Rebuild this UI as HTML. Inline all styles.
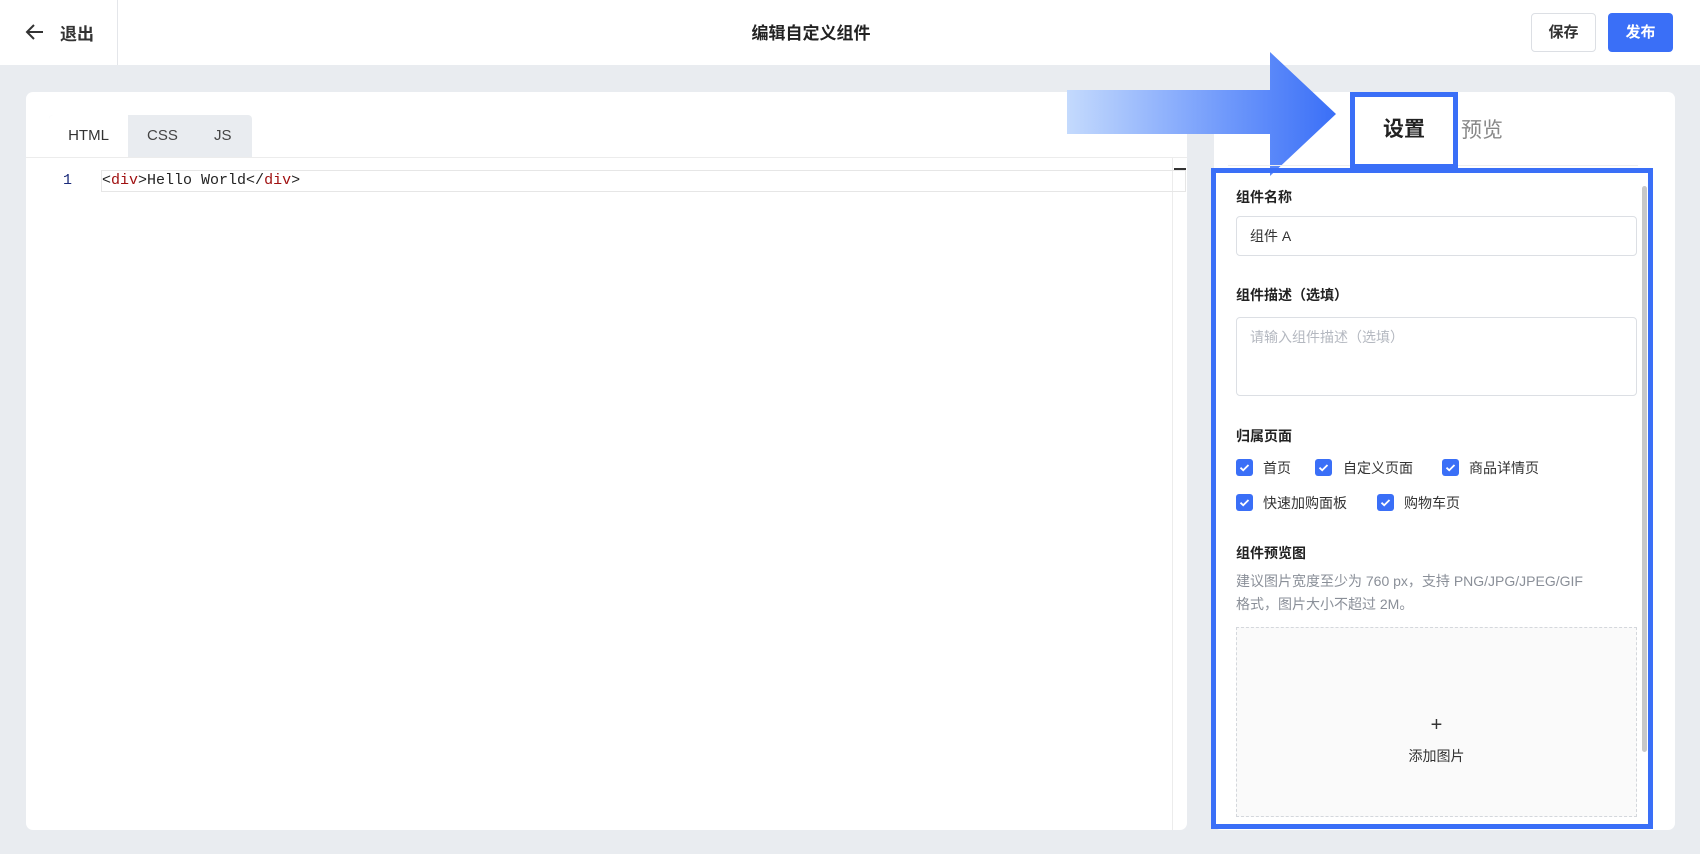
<!DOCTYPE html>
<html><head><meta charset="utf-8"><style>
*{box-sizing:border-box;margin:0;padding:0}
body{width:1700px;height:854px;overflow:hidden;background:#e9ecf0;font-family:"Liberation Sans","Noto Sans CJK SC",sans-serif;color:#333;position:relative}
.abs{position:absolute}
.hdr{left:0;top:0;width:1700px;height:65px;background:#fff}
.card{background:#fff;border-radius:7px}
.lbl{font-size:14px;font-weight:bold;color:#222}
.cbt{font-size:14px;color:#333}
</style></head><body>
<div class="abs hdr"></div>
<div class="abs" style="left:117px;top:0;width:1px;height:65px;background:#e4e6ea"></div>
<svg class="abs" style="left:25px;top:23px" width="20" height="18" viewBox="0 0 20 18"><path d="M18 9H3M9 2L2 9l7 7" fill="none" stroke="#333" stroke-width="2"/></svg>
<div class="abs" style="left:60px;top:20px;font-size:17px;font-weight:bold;color:#333">退出</div>
<div class="abs" style="left:0;width:1622px;top:19px;text-align:center;font-size:17px;font-weight:bold;color:#222">编辑自定义组件</div>
<div class="abs" style="left:1531px;top:13px;width:65px;height:39px;border:1px solid #dcdfe4;border-radius:4px;text-align:center;line-height:37px;font-size:15px;font-weight:bold;color:#333">保存</div>
<div class="abs" style="left:1608px;top:13px;width:65px;height:39px;background:#3a6ff7;border-radius:4px;text-align:center;line-height:39px;font-size:15px;font-weight:bold;color:#fff">发布</div>

<div class="abs card" style="left:26px;top:92px;width:1161px;height:738px"></div>
<div class="abs card" style="left:1214px;top:92px;width:461px;height:738px"></div>

<div class="abs" style="left:49px;top:115px;width:203px;height:42px;background:#e9ecf0;border-radius:4px 4px 0 0"></div>
<div class="abs" style="left:49px;top:115px;width:79px;height:43px;background:#fff;border-radius:4px 0 0 0;text-align:center;line-height:42px;font-size:15px;color:#333">HTML</div>
<div class="abs" style="left:147px;top:115px;line-height:42px;font-size:15px;color:#444">CSS</div>
<div class="abs" style="left:214px;top:115px;line-height:42px;font-size:15px;color:#444">JS</div>
<div class="abs" style="left:26px;top:157px;width:1161px;height:1px;background:#ececec"></div>
<div class="abs" style="left:1172px;top:158px;width:1px;height:672px;background:#ececec"></div>
<div class="abs" style="left:1174px;top:168px;width:12px;height:2px;background:#333"></div>
<div class="abs" style="left:101px;top:170px;width:1085px;height:22px;border:1px solid #e6e6e6"></div>
<div class="abs" style="left:63px;top:172px;font-family:'Liberation Mono',monospace;font-size:15px;color:#1a2a7a">1</div>
<div class="abs" style="left:102px;top:172px;font-family:'Liberation Mono',monospace;font-size:15px;color:#222">&lt;<span style="color:#a01010">div</span>&gt;Hello World&lt;/<span style="color:#a01010">div</span>&gt;</div>

<svg class="abs" style="left:1064px;top:50px" width="285" height="128" viewBox="0 0 285 128"><defs><linearGradient id="g" x1="0" x2="1"><stop offset="0" stop-color="#c4dafd"/><stop offset="0.6" stop-color="#6e98fb"/><stop offset="1" stop-color="#3a6ff7"/></linearGradient></defs><path d="M3 40H206V2L272 64L206 126V84H3Z" fill="url(#g)"/></svg>

<div class="abs" style="left:1228px;top:165px;width:410px;height:1px;background:#eee"></div>
<div class="abs" style="left:1350px;top:92px;width:108px;height:77px;border:5px solid #3a6ff7;background:#fff;text-align:center;line-height:66px;font-size:21px;font-weight:bold;color:#222">设置</div>
<div class="abs" style="left:1461px;top:114px;font-size:21px;color:#888">预览</div>

<div class="abs" style="left:1211px;top:168px;width:442px;height:661px;border:5px solid #3a6ff7"></div>
<div class="abs" style="left:1642px;top:186px;width:5px;height:566px;background:#c8c8c8;border-radius:3px"></div>

<div class="abs lbl" style="left:1236px;top:187px">组件名称</div>
<div class="abs" style="left:1236px;top:216px;width:401px;height:40px;border:1px solid #dcdfe4;border-radius:4px;padding-left:13px;line-height:38px;font-size:14px;color:#333">组件 A</div>
<div class="abs lbl" style="left:1236px;top:285px">组件描述（选填）</div>
<div class="abs" style="left:1236px;top:317px;width:401px;height:79px;border:1px solid #dcdfe4;border-radius:4px;padding:9px 13px;font-size:14px;color:#b4b8c0">请输入组件描述（选填）</div>
<div class="abs lbl" style="left:1236px;top:426px">归属页面</div>

<svg width="0" height="0" style="position:absolute"><defs><symbol id="ck" viewBox="0 0 17 17"><rect width="17" height="17" rx="3" fill="#3a6ff7"/><path d="M4.5 8.7l2.7 2.6 5.3-5.3" fill="none" stroke="#fff" stroke-width="1.8"/></symbol></defs></svg>
<svg class="abs" style="left:1236px;top:459px" width="17" height="17"><use href="#ck"/></svg><div class="abs cbt" style="left:1263px;top:458px">首页</div>
<svg class="abs" style="left:1315px;top:459px" width="17" height="17"><use href="#ck"/></svg><div class="abs cbt" style="left:1343px;top:458px">自定义页面</div>
<svg class="abs" style="left:1442px;top:459px" width="17" height="17"><use href="#ck"/></svg><div class="abs cbt" style="left:1469px;top:458px">商品详情页</div>
<svg class="abs" style="left:1236px;top:494px" width="17" height="17"><use href="#ck"/></svg><div class="abs cbt" style="left:1263px;top:493px">快速加购面板</div>
<svg class="abs" style="left:1377px;top:494px" width="17" height="17"><use href="#ck"/></svg><div class="abs cbt" style="left:1404px;top:493px">购物车页</div>

<div class="abs lbl" style="left:1236px;top:543px">组件预览图</div>
<div class="abs" style="left:1236px;top:570px;white-space:nowrap;font-size:14px;line-height:23px;color:#8a8f98">建议图片宽度至少为 760 px，支持 PNG/JPG/JPEG/GIF<br>格式，图片大小不超过 2M。</div>
<div class="abs" style="left:1236px;top:627px;width:401px;height:190px;border:1px dashed #d4d7dc;background:#fafafa"></div>
<div class="abs" style="left:1236px;top:714px;width:401px;text-align:center;font-size:20px;color:#333">+</div>
<div class="abs" style="left:1236px;top:746px;width:401px;text-align:center;font-size:14px;color:#333">添加图片</div>
</body></html>
